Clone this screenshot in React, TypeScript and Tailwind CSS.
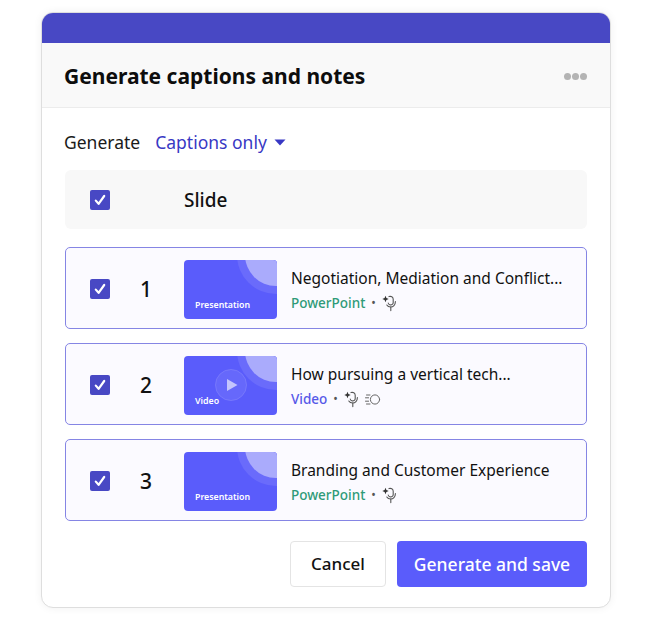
import React from "react";

function Check() {
  return (
    <div className="flex h-5 w-5 items-center justify-center rounded-[2px] bg-[#4848c4]">
      <svg width="14" height="14" viewBox="0 0 14 14" fill="none">
        <path d="M2.8 7.6 L5.6 10.8 L11.2 3" stroke="#fff" strokeWidth="2.2" strokeLinecap="round" strokeLinejoin="round" />
      </svg>
    </div>
  );
}

function MicIcon() {
  return (
    <svg width="16" height="17" viewBox="0 0 16 17" fill="none" stroke="#555" strokeWidth="1.1" strokeLinecap="round">
      <path d="M3.5 0.8 L4.4 3.1 L6.7 4 L4.4 4.9 L3.5 7.2 L2.6 4.9 L0.3 4 L2.6 3.1 Z" fill="#333" stroke="none" />
      <path d="M7 1.6 C9 0.8 11.2 2 11.2 4.2 V7.4 C11.2 9.2 9.7 10.2 8.2 9.9 C7.2 9.7 6.4 9 6.2 8" />
      <path d="M13.4 6.6 C13.4 10 11.2 12 8.6 12 C7 12 5.6 11.3 4.8 10" />
      <path d="M8.8 12 V15.6" />
    </svg>
  );
}

function SpeedIcon() {
  return (
    <svg width="16" height="13" viewBox="0 0 16 13" fill="none" stroke="#666" strokeWidth="1" strokeLinecap="round">
      <circle cx="10" cy="6.5" r="4.6" />
      <path d="M1.5 2 H5 M0.5 4.8 H3.6 M0.5 8.2 H3.6 M1.5 11 H5" />
    </svg>
  );
}

function Thumb({ label, video }: { label: string; video?: boolean }) {
  return (
    <div className="relative h-[59px] w-[93px] shrink-0 overflow-hidden rounded-[4px] bg-[#5a5cfb]">
      <svg className="absolute inset-0" width="93" height="59" viewBox="0 0 93 59">
        <circle cx="92" cy="-5" r="39" fill="#6a6bfb" />
        <circle cx="92" cy="-5" r="31" fill="#aaabfc" />
        {video && (
          <g>
            <circle cx="47" cy="29" r="15.5" fill="#6668fb" stroke="#7f80fb" strokeWidth="0.7" />
            <path d="M43 23 L53.5 29 L43 35 Z" fill="#c4c5fd" />
          </g>
        )}
      </svg>
      <span className="absolute bottom-[7px] left-[11px] text-[8.8px] leading-[13px] font-semibold text-white">{label}</span>
    </div>
  );
}

function Row({ n, title, kind, label, speed }: { n: number; title: string; kind: string; label: string; speed?: boolean }) {
  const video = kind === "Video";
  return (
    <div className="flex h-[82px] items-center rounded-[5px] border border-[#8585e4] bg-[#fbfaff] pt-[2px]">
      <div className="flex w-[68px] justify-center"><Check /></div>
      <div className="ml-[1px] w-[22px] text-center text-[21px] leading-none font-medium text-[#111]">{n}</div>
      <div className="ml-[27px]"><Thumb label={label} video={video} /></div>
      <div className="ml-[14px] flex min-w-0 flex-col pt-[2px]">
        <div className="text-[15.5px] leading-[22px] whitespace-nowrap text-[#111]">{title}</div>
        <div className="mt-[4px] flex h-[20px] items-center">
          <span className={`text-[13.5px] leading-[20px] font-medium ${video ? "text-[#5658e8]" : "text-[#2f9a78]"}`}>{kind}</span>
          <span className="mx-[6px] text-[12px] leading-none text-[#555]">•</span>
          <MicIcon />
          {speed && <span className="ml-[5px]"><SpeedIcon /></span>}
        </div>
      </div>
    </div>
  );
}

export default function App() {
  return (
    <div className="h-[620px] w-[648px] bg-white pt-[12px] pl-[41px] font-['Noto_Sans',sans-serif]">
      <div className="h-[596px] w-[570px] overflow-hidden rounded-[12px] border border-[#dedede] bg-white shadow-[0_0_8px_rgba(0,0,0,0.06)]">
        <div className="h-[30px] bg-[#4848c4]" />
        <div className="flex h-[65px] items-center justify-between border-b border-[#ececec] bg-[#f9f9f9] pt-[2px] pr-[23px] pl-[22px]">
          <h1 className="text-[21px] leading-[28px] font-bold text-[#0d0d0d]">Generate captions and notes</h1>
          <div className="flex gap-[1px]">
            <span className="h-[7px] w-[7px] rounded-full bg-[#b4b4b4]" />
            <span className="h-[7px] w-[7px] rounded-full bg-[#b4b4b4]" />
            <span className="h-[7px] w-[7px] rounded-full bg-[#b4b4b4]" />
          </div>
        </div>
        <div className="pr-[23px] pl-[23px]">
          <div className="flex h-[62px] items-center pt-[6px] text-[17.5px] leading-[24px]">
            <span className="-ml-[1px] text-[#1a1a1a]">Generate</span>
            <span className="ml-[15px] text-[#3838c4]">Captions only</span>
            <svg className="ml-[7px]" width="12" height="7" viewBox="0 0 12 7"><path d="M0.5 0.5 H11.5 L6 6.5 Z" fill="#3838c4" /></svg>
          </div>
          <div className="flex h-[59px] items-center rounded-[6px] bg-[#f8f8f8]">
            <div className="flex w-[70px] justify-center"><Check /></div>
            <div className="ml-[49px] text-[19px] leading-[24px] font-medium text-[#111]">Slide</div>
          </div>
          <div className="mt-[18px] flex flex-col gap-[14px]">
            <Row n={1} title="Negotiation, Mediation and Conflict..." kind="PowerPoint" label="Presentation" />
            <Row n={2} title="How pursuing a vertical tech..." kind="Video" label="Video" speed />
            <Row n={3} title="Branding and Customer Experience" kind="PowerPoint" label="Presentation" />
          </div>
          <div className="mt-[20px] flex justify-end gap-[11px]">
            <button className="h-[46px] w-[96px] rounded-[4px] border border-[#e4e4e4] bg-white text-[17px] font-medium text-[#111]">Cancel</button>
            <button className="h-[46px] w-[190px] rounded-[4px] bg-[#5a5cfb] text-[17.5px] font-medium text-white">Generate and save</button>
          </div>
        </div>
      </div>
    </div>
  );
}
